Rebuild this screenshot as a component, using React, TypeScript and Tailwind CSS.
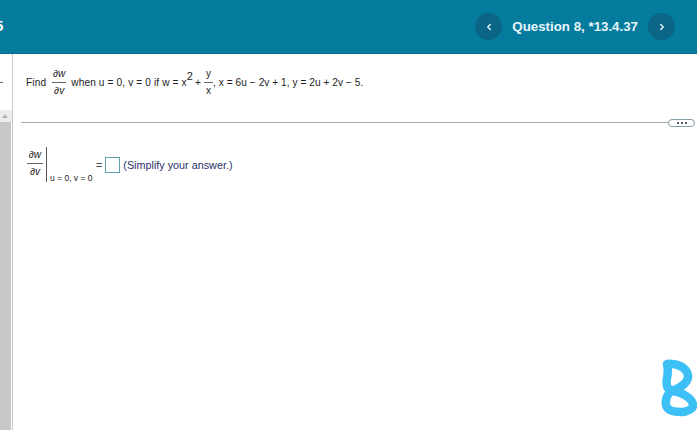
import { ChevronLeft, ChevronRight } from "lucide-react";

function Frac({ top, bottom, width, italic }: { top: string; bottom: string; width: string; italic?: boolean }) {
  return (
    <span className={`inline-flex flex-col items-center leading-none ${width} ${italic ? "italic" : ""}`}>
      <span className="h-[13px] leading-[10px]">{top}</span>
      <span className="h-px w-full bg-[#666]" />
      <span className="h-[13px] leading-[15px]">{bottom}</span>
    </span>
  );
}

function NavButton({ children }: { children: React.ReactNode }) {
  return (
    <button className="flex h-[27px] w-[27px] items-center justify-center rounded-full bg-[#0b6585] text-[#dff3f8]">
      {children}
    </button>
  );
}

export default function App() {
  return (
    <div className="relative flex h-[430px] w-[697px] flex-col overflow-hidden bg-white font-['Liberation_Sans',Arial,sans-serif] text-[#222]">
      <header className="flex h-[54px] shrink-0 items-center justify-between border-b border-[#0a6c8a] bg-[#057b9d] pr-[22px] text-white">
        <span className="-ml-[5px] text-[15px] font-bold">5</span>
        <div className="flex items-center">
          <NavButton>
            <ChevronLeft size={10} strokeWidth={3.5} />
          </NavButton>
          <span className="ml-[10px] mr-[10px] text-[13.3px] font-bold text-[#e6f6fa]">Question 8, *13.4.37</span>
          <NavButton>
            <ChevronRight size={10} strokeWidth={3.5} />
          </NavButton>
        </div>
      </header>

      <div className="flex min-h-0 flex-1">
        <aside className="flex w-[13px] shrink-0 flex-col border-r border-[#c9c9c9]">
          <div className="flex h-[56px] items-center">
            <span className="mt-[1px] h-px w-[3px] bg-[#666]" />
          </div>
          <div className="flex h-[12px] items-center justify-center bg-[#ededed] pr-[2px]">
            <span className="h-0 w-0 border-x-[3px] border-b-[4px] border-x-transparent border-b-[#b5b5b5]" />
          </div>
          <div className="mr-[1px] flex-1 bg-[#c8c8c8]" />
        </aside>

        <main className="min-w-0 flex-1 pt-[12px] text-[10.1px]">
          <div className="ml-[13px] flex h-[32px] items-center pt-[1px] tracking-[0.14px]">
            <span>Find</span>
            <Frac top="∂w" bottom="∂v" width="w-[14px] ml-[6px]" italic />
            <span className="ml-[5px]">when u = 0, v = 0 if w = x</span>
            <span className="mb-[12px] text-[11px] leading-none">2</span>
            <span className="ml-[2px]">+</span>
            <Frac top="y" bottom="x" width="w-[9px] ml-[3px]" />
            <span className="tracking-[0.06px]">, x = 6u − 2v + 1, y = 2u + 2v − 5.</span>
          </div>

          <div className="mt-[20px] flex h-[9px] items-center pl-[8px] pr-[2px]">
            <div className="h-px flex-1 bg-[#a9a9a9]" />
            <div className="flex h-[8px] w-[27px] items-center justify-center gap-[2px] rounded-full border border-[#8a9ca3] bg-white">
              <span className="h-[2px] w-[2px] bg-[#556]" />
              <span className="h-[2px] w-[2px] bg-[#556]" />
              <span className="h-[2px] w-[2px] bg-[#556]" />
            </div>
          </div>

          <div className="ml-[14px] mt-[20px] flex h-[35px] items-start">
            <div className="flex h-[35px] items-center pb-[2px]">
              <Frac top="∂w" bottom="∂v" width="w-[16px]" italic />
            </div>
            <div className="ml-[3px] flex h-[35px] w-[47px] flex-col justify-end whitespace-nowrap border-l border-[#555] pl-[3px] text-[8.5px] leading-[7px]">
              u = 0, v = 0
            </div>
            <div className="ml-[3px] mt-[10px] flex items-center text-[10.8px]">
              <span className="text-[#444]">=</span>
              <span className="ml-[3px] h-[16px] w-[15px] border border-[#5f9fb0] bg-white" />
              <span className="ml-[3px] text-[#2b2f6b]">(Simplify your answer.)</span>
            </div>
          </div>
        </main>
      </div>

      <svg className="absolute left-[657px] top-[355px]" width="40" height="65" viewBox="0 0 40 65" fill="none">
        <path
          d="M10 9 C20 8 29 12 31 20 C32 27 24 33 14 36 C10 34 9 29 10 23 C11 18 11 13 10 9 Z M14 36 C22 36 34 42 36 49 C37 54 30 57 24 57 C16 57 10 55 9 50 C8 44 10 40 14 36 Z"
          stroke="#3cc0f6"
          strokeWidth="8.5"
          strokeLinejoin="round"
        />
      </svg>
    </div>
  );
}
